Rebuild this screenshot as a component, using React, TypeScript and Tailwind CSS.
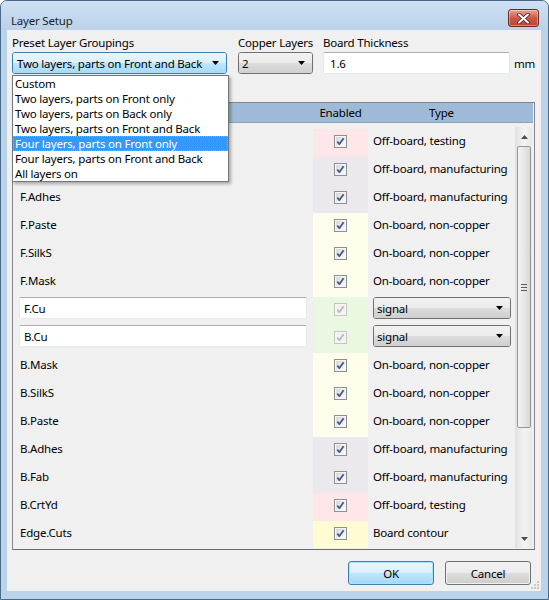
import React from "react";

type Row = { name: string; type: string; color: string; copper?: boolean; hidden?: boolean };

const TEST = "#ffe6e8";
const MANU = "#ebe9ee";
const NONCU = "#fffdeb";
const CU = "#eaf8e2";
const EDGE = "#fffcd4";

const rows: Row[] = [
  { name: "F.CrtYd", type: "Off-board, testing", color: TEST, hidden: true },
  { name: "F.Fab", type: "Off-board, manufacturing", color: MANU, hidden: true },
  { name: "F.Adhes", type: "Off-board, manufacturing", color: MANU },
  { name: "F.Paste", type: "On-board, non-copper", color: NONCU },
  { name: "F.SilkS", type: "On-board, non-copper", color: NONCU },
  { name: "F.Mask", type: "On-board, non-copper", color: NONCU },
  { name: "F.Cu", type: "signal", color: CU, copper: true },
  { name: "B.Cu", type: "signal", color: CU, copper: true },
  { name: "B.Mask", type: "On-board, non-copper", color: NONCU },
  { name: "B.SilkS", type: "On-board, non-copper", color: NONCU },
  { name: "B.Paste", type: "On-board, non-copper", color: NONCU },
  { name: "B.Adhes", type: "Off-board, manufacturing", color: MANU },
  { name: "B.Fab", type: "Off-board, manufacturing", color: MANU },
  { name: "B.CrtYd", type: "Off-board, testing", color: TEST },
  { name: "Edge.Cuts", type: "Board contour", color: EDGE },
];

const presets = [
  "Custom",
  "Two layers, parts on Front only",
  "Two layers, parts on Back only",
  "Two layers, parts on Front and Back",
  "Four layers, parts on Front only",
  "Four layers, parts on Front and Back",
  "All layers on",
];

function Check({ disabled }: { disabled?: boolean }) {
  return (
    <svg width="13" height="13" viewBox="0 0 13 13" className="block">
      <defs>
        <linearGradient id="cbg" x1="0" y1="0" x2="1" y2="1">
          <stop offset="0" stopColor="#d8d8d8" />
          <stop offset="1" stopColor="#fafafa" />
        </linearGradient>
      </defs>
      <rect x="0.5" y="0.5" width="12" height="12" fill="#f6f6f6" stroke={disabled ? "#c4c4c4" : "#8e8f8f"} />
      <rect x="2" y="2" width="9" height="9" fill={disabled ? "#f2f2f2" : "url(#cbg)"} />
      <path
        d="M3.3 6.6 L5.3 9.2 L9.6 3.2"
        stroke={disabled ? "#b8b8b8" : "#3d5592"}
        strokeWidth="1.7"
        fill="none"
        strokeLinejoin="round"
      />
    </svg>
  );
}

function Arrow() {
  return (
    <svg width="7" height="4" viewBox="0 0 7 4" className="block">
      <path d="M0 0 H7 L3.5 4 Z" fill="#000" />
    </svg>
  );
}

function GrayCombo({ text, className }: { text: string; className: string }) {
  return (
    <div
      className={
        "relative flex items-center justify-between rounded-[3px] border border-[#707070] pl-[3px] pr-[7px] overflow-hidden " +
        className
      }
    >
      <div className="absolute inset-0 flex flex-col">
        <div className="flex-1 bg-gradient-to-b from-[#f2f2f2] to-[#ebebeb]" />
        <div className="flex-1 bg-gradient-to-b from-[#dddddd] to-[#cfcfcf]" />
      </div>
      <span className="relative leading-[15px]">{text}</span>
      <span className="relative">
        <Arrow />
      </span>
    </div>
  );
}

export default function App() {
  return (
    <div className="relative w-[549px] h-[600px] overflow-hidden rounded-t-[7px] border border-[#4a6a8c] bg-[#bad2ea] font-['Noto_Sans',sans-serif] text-[11.5px] tracking-[-0.2px] text-black">
      {/* title bar */}
      <div className="h-[29px] flex items-start justify-between pl-[10px] pr-[9px] bg-gradient-to-b from-[#cfe0f2] to-[#bad2ea]">
        <span className="mt-[12px] leading-[15px] text-[#1e1e1e]">Layer Setup</span>
        <div className="mt-[8px] w-[31px] h-[18px] rounded-[3px] border border-[#6e2a20] flex items-center justify-center bg-gradient-to-b from-[#e8a597] via-[#c9594a] to-[#c2402f] shadow-[inset_0_0_0_1px_rgba(255,255,255,0.35)]">
          <svg width="13" height="11" viewBox="0 0 13 11">
            <path d="M2 1.5 L11 9.5 M11 1.5 L2 9.5" stroke="#4a2020" strokeWidth="3.6" strokeLinecap="round" />
            <path d="M2 1.5 L11 9.5 M11 1.5 L2 9.5" stroke="#ffffff" strokeWidth="2" strokeLinecap="round" />
          </svg>
        </div>
      </div>

      {/* client area */}
      <div className="relative ml-[6px] w-[534px] h-[561px] bg-[#f0f0f0] flex flex-col">
        <div className="px-[5px] pt-[5px] flex flex-col">
          {/* top controls */}
          <div className="flex">
            <div className="w-[215px] flex flex-col">
              <div className="h-[15px] leading-[15px]">Preset Layer Groupings</div>
              <div className="relative mt-[2px] h-[22px] rounded-[3px] border border-[#3c7fb1] pl-[4px] pr-[7px] flex items-center justify-between overflow-hidden">
                <div className="absolute inset-0 flex flex-col">
                  <div className="flex-1 bg-gradient-to-b from-[#eaf6fd] to-[#d9f0fc]" />
                  <div className="flex-1 bg-gradient-to-b from-[#bee6fd] to-[#a7d9f5]" />
                </div>
                <span className="relative leading-[15px] whitespace-nowrap">Two layers, parts on Front and Back</span>
                <span className="relative">
                  <Arrow />
                </span>
              </div>
            </div>
            <div className="ml-[11px] w-[75px] flex flex-col">
              <div className="h-[15px] leading-[15px] whitespace-nowrap">Copper Layers</div>
              <GrayCombo text="2" className="mt-[2px] h-[22px]" />
            </div>
            <div className="ml-[10px] w-[187px] flex flex-col">
              <div className="h-[15px] leading-[15px] whitespace-nowrap">Board Thickness</div>
              <div className="mt-[2px] h-[22px] bg-white border border-[#e3e9ef] border-t-[#abadb3] rounded-[2px] flex items-center pl-[6px]">
                <span className="leading-[15px]">1.6</span>
              </div>
            </div>
            <div className="ml-[4px] mt-[17px] h-[22px] flex items-center leading-[15px]">mm</div>
          </div>

          {/* grid */}
          <div className="mt-[28px] w-[523px] h-[448px] border border-[#828790] border-b-[#6d6d6d] flex flex-col">
            <div className="h-[20px] flex items-center bg-[#9fbad7] border-b border-[#8aa4c2] mr-[1px]">
              <div className="w-[300px]" />
              <div className="w-[55px] text-center leading-[15px]">Enabled</div>
              <div className="w-[147px] text-center leading-[15px]">Type</div>
            </div>
            <div className="mt-[4px] h-[421px] flex overflow-hidden">
              <div className="w-[502px] pt-[2px] flex flex-col">
                {rows.map((r) => (
                  <div key={r.name} className="h-[28px] shrink-0 flex">
                    <div className="w-[300px] flex items-start">
                      {r.copper ? (
                        <div className="ml-[6px] w-[288px] h-[22px] bg-white border border-[#e3e9ef] border-t-[#abadb3] rounded-[2px] flex items-center pl-[4px]">
                          <span className="leading-[15px]">{r.name}</span>
                        </div>
                      ) : r.hidden ? null : (
                        <span className="pl-[7px] pt-[4px] leading-[15px]">{r.name}</span>
                      )}
                    </div>
                    <div className="w-[55px] flex justify-center pt-[6px]" style={{ backgroundColor: r.color }}>
                      <Check disabled={r.copper} />
                    </div>
                    <div className="w-[147px] flex items-start">
                      {r.copper ? (
                        <GrayCombo text="signal" className="ml-[5px] w-[138px] h-[22px]" />
                      ) : (
                        <span className="pl-[5px] pt-[4px] leading-[15px] whitespace-nowrap">{r.type}</span>
                      )}
                    </div>
                  </div>
                ))}
              </div>
              {/* scrollbar */}
              <div className="w-[17px] h-full flex flex-col bg-gradient-to-r from-[#e3e3e3] via-[#f3f3f3] to-[#e9e9e9] border-l border-[#e0e0e0]">
                <div className="h-[19px] flex items-center justify-center">
                  <svg width="7" height="4" viewBox="0 0 7 4">
                    <path d="M0 4 H7 L3.5 0 Z" fill="#4d4d4d" />
                  </svg>
                </div>
                <div className="mx-[1px] h-[282px] rounded-[2px] border border-[#979797] bg-gradient-to-r from-[#f3f3f3] via-[#e8e8e8] to-[#d6d6d6] flex items-center justify-center">
                  <div className="flex flex-col gap-[2px]">
                    <div className="w-[6px] h-[1px] bg-[#5a5a5a]" />
                    <div className="w-[6px] h-[1px] bg-[#5a5a5a]" />
                    <div className="w-[6px] h-[1px] bg-[#5a5a5a]" />
                  </div>
                </div>
                <div className="flex-1" />
                <div className="h-[19px] flex items-center justify-center">
                  <svg width="7" height="4" viewBox="0 0 7 4">
                    <path d="M0 0 H7 L3.5 4 Z" fill="#4d4d4d" />
                  </svg>
                </div>
              </div>
            </div>
          </div>

          {/* buttons */}
          <div className="mt-[11px] flex justify-end gap-[11px] pr-[5px]">
            <div className="relative w-[86px] h-[24px] rounded-[3px] border border-[#3c7fb1] flex items-center justify-center overflow-hidden shadow-[inset_0_0_0_1px_#a8e3fa]">
              <div className="absolute inset-[1px] flex flex-col rounded-[2px] overflow-hidden">
                <div className="flex-1 bg-gradient-to-b from-[#eaf6fd] to-[#d9f0fc]" />
                <div className="flex-1 bg-gradient-to-b from-[#bee6fd] to-[#a7d9f5]" />
              </div>
              <span className="relative leading-[15px]">OK</span>
            </div>
            <div className="relative w-[86px] h-[24px] rounded-[3px] border border-[#707070] flex items-center justify-center overflow-hidden">
              <div className="absolute inset-[1px] flex flex-col rounded-[2px] overflow-hidden">
                <div className="flex-1 bg-gradient-to-b from-[#f2f2f2] to-[#ebebeb]" />
                <div className="flex-1 bg-gradient-to-b from-[#dddddd] to-[#cfcfcf]" />
              </div>
              <span className="relative leading-[15px]">Cancel</span>
            </div>
          </div>
        </div>

        {/* resize grip */}
        <svg className="absolute right-[1px] bottom-[1px]" width="10" height="10" viewBox="0 0 10 10">
          <rect x="7" y="1" width="2" height="2" fill="#c8c8c8" />
          <rect x="4" y="4" width="2" height="2" fill="#c8c8c8" />
          <rect x="7" y="4" width="2" height="2" fill="#c8c8c8" />
          <rect x="1" y="7" width="2" height="2" fill="#c8c8c8" />
          <rect x="4" y="7" width="2" height="2" fill="#c8c8c8" />
          <rect x="7" y="7" width="2" height="2" fill="#c8c8c8" />
        </svg>
      </div>

      {/* open dropdown list */}
      <div className="absolute left-[11px] top-[74px] w-[217px] bg-white border border-[#767676] shadow-[2px_2px_3px_rgba(0,0,0,0.3)]">
        {presets.map((p, i) => (
          <div
            key={p}
            className={
              "h-[15px] leading-[15px] pl-[2px] whitespace-nowrap " +
              (i === 4 ? "bg-[#3399ff] text-white outline outline-1 outline-dotted outline-[#e8a040] -outline-offset-1" : "")
            }
          >
            {p}
          </div>
        ))}
      </div>
    </div>
  );
}
